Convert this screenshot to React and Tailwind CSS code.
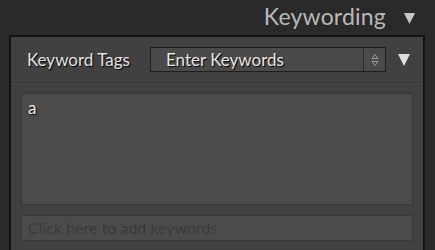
import React from 'react';

const font = { fontFamily: '"Lato", "Open Sans", sans-serif' };

const Triangle = ({ className }) => (
    <svg viewBox="0 0 14 14" className={className}>
        <polygon points="1,1 13,1 7,13" fill="currentColor" />
    </svg>
);

const App = () => {
    return (
        <div className="w-[435px] h-[250px] bg-[#2a2a2a] overflow-hidden flex flex-col" style={font}>
            {/* Panel header */}
            <div className="h-[35px] shrink-0 flex items-center justify-end pr-[19px] gap-[17px]">
                <span className="text-[23px] leading-none text-[#b9b9b9] tracking-[0.2px] pb-[2px]">Keywording</span>
                <Triangle className="w-[13px] h-[13px] text-[#c4c4c4] mt-[1px]" />
            </div>

            {/* Panel body */}
            <div className="flex-1 ml-[9px] mr-[10px] border-x-2 border-t-2 border-[#141414] bg-[#414141] flex flex-col">
                <div className="h-[46px] shrink-0 flex items-center pl-[16px] pr-[11px] border-b border-[#363636] shadow-[0_1px_0_#4a4a4a]">
                    <span className="text-[17px] text-[#e2e2e2] [text-shadow:1px_1px_1px_#000] w-[123px]">Keyword Tags</span>
                    <div className="w-[236px] h-[25px] border border-[#1e1e1e] bg-[#4a4a4a] flex">
                        <div className="flex-1 flex items-center pl-[15px] text-[17px] text-[#e6e6e6] [text-shadow:1px_1px_1px_#000]">
                            Enter Keywords
                        </div>
                        <div className="w-[22px] border-l border-[#2a2a2a] flex flex-col items-center justify-center gap-[2px]">
                            <svg viewBox="0 0 8 5" className="w-[8px] h-[5px]"><polygon points="1,4.5 4,0.5 7,4.5" fill="none" stroke="#9a9a9a" strokeWidth="1" /></svg>
                            <svg viewBox="0 0 8 5" className="w-[8px] h-[5px]"><polygon points="1,0.5 4,4.5 7,0.5" fill="none" stroke="#9a9a9a" strokeWidth="1" /></svg>
                        </div>
                    </div>
                    <Triangle className="ml-[11px] w-[14px] h-[14px] text-[#e0e0e0]" />
                </div>

                <div className="flex-1 px-[10px] pt-[10px] flex flex-col">
                    <div className="h-[112px] border border-[#383838] bg-[#4b4b4b] px-[6px] pt-[1px]">
                        <span className="text-[17px] text-[#ececec] [text-shadow:1px_1px_1px_#000]">a</span>
                    </div>
                    <div className="mt-[10px] h-[26px] border border-[#383838] bg-[#4b4b4b] flex items-center px-[6px]">
                        <span className="text-[16px] text-[#3a3a3a]">Click here to add keywords</span>
                    </div>
                </div>
            </div>
        </div>
    );
};

export default App;
